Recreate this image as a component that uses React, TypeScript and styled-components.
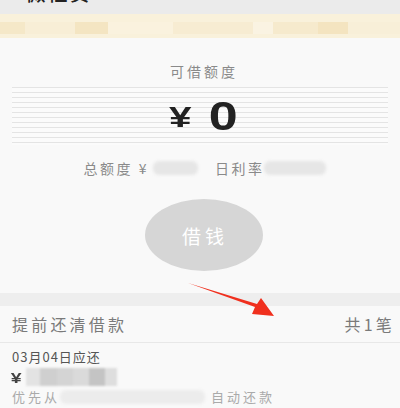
import styled, { createGlobalStyle } from "styled-components"

const Global = createGlobalStyle`
  html, body {
    margin: 0;
    padding: 0;
    background: #f9f9f9;
    font-family: "Noto Sans CJK SC", "Noto Sans", sans-serif;
  }
  * { box-sizing: border-box; }
`;

const Page = styled.div`
  position: relative;
  width: 400px;
  height: 408px;
  overflow: hidden;
  background: #f9f9f9;
`;

const TopBar = styled.div`
  height: 14px;
  background: #ebebeb;
  overflow: hidden;
  display: flex;
  align-items: flex-end;
  gap: 12px;
`;

const TopText = styled.span`
  font-size: 20px;
  line-height: 20px;
  font-weight: 500;
  letter-spacing: 2px;
  color: #222;
  margin-bottom: 11px;
`;

const Notice = styled.div`
  height: 24px;
  display: flex;
  background: #f9f1db;
  padding: 8px 0 4px;
`;

const Pixel = styled.div<{ $w: number; $c: string }>`
  width: ${(p) => p.$w}px;
  height: 100%;
  background: ${(p) => p.$c};
`;

const Card = styled.div`
  display: flex;
  flex-direction: column;
  align-items: center;
  padding-top: 24px;
  height: 255px;
`;

const Caption = styled.div`
  font-size: 14px;
  letter-spacing: 3px;
  color: #8a8a8a;
  line-height: 18px;
  margin-left: 8px;
`;

const Striped = styled.div`
  margin-top: 7px;
  width: 376px;
  height: 58px;
  display: flex;
  align-items: center;
  justify-content: center;
  gap: 16px;
  background: repeating-linear-gradient(
    to bottom,
    #e4e4e4 0px,
    #e4e4e4 1px,
    #fbfbfb 1px,
    #fbfbfb 5px
  );
`;

const Yen = styled.span`
  display: inline-block;
  font-family: "Liberation Sans", Arial, sans-serif;
  font-size: 30px;
  font-weight: 700;
  color: #222;
  margin-top: 2px;
  margin-left: 6px;
  transform: scaleX(1.35);
`;

const Big = styled.span`
  display: inline-block;
  font-family: "Liberation Sans", Arial, sans-serif;
  font-size: 40px;
  font-weight: 700;
  color: #222;
  transform: scaleX(1.3);
  margin-left: 8px;
`;

const InfoRow = styled.div`
  margin-top: 14px;
  display: flex;
  align-items: center;
  font-size: 14px;
  letter-spacing: 2.5px;
  color: #8a8a8a;
  line-height: 18px;
  margin-left: 10px;
`;

const Blur = styled.div<{ $w: number; $h?: number; $c?: string }>`
  width: ${(p) => p.$w}px;
  height: ${(p) => p.$h ?? 14}px;
  background: ${(p) => p.$c ?? "#e6e6e6"};
  border-radius: 6px;
  filter: blur(1.5px);
`;

const Gap = styled.div<{ $w: number }>`
  width: ${(p) => p.$w}px;
`;

const BorrowButton = styled.button`
  margin-top: 22px;
  margin-left: 8px;
  width: 118px;
  height: 72px;
  border-radius: 50%;
  border: none;
  background: #d6d6d6;
  color: #fff;
  font-size: 19px;
  letter-spacing: 4px;
  padding-left: 8px;
  font-family: inherit;
`;

const Band = styled.div`
  height: 13px;
  background: #eeeeee;
`;

const SectionRow = styled.div`
  height: 37px;
  display: flex;
  align-items: center;
  justify-content: space-between;
  padding: 0 5px 0 12px;
  font-size: 16px;
  letter-spacing: 3.2px;
  color: #7a7a7a;
  border-bottom: 1px solid #e8e8e8;
  background: #f9f9f9;
`;

const Item = styled.div`
  padding: 6px 12px 0;
  display: flex;
  flex-direction: column;
  gap: 2px;
`;

const Due = styled.div`
  font-size: 13px;
  letter-spacing: 1px;
  color: #555;
  line-height: 16px;
`;

const AmountRow = styled.div`
  display: flex;
  align-items: center;
  height: 20px;
`;

const SmallYen = styled.span`
  display: inline-block;
  font-family: "Liberation Sans", Arial, sans-serif;
  font-size: 15px;
  font-weight: 700;
  color: #444;
  margin-right: 6px;
  transform: scaleX(1.3);
`;

const PixelBlock = styled.div`
  display: flex;
  height: 18px;
  filter: blur(1px);
`;

const AutoRow = styled.div`
  display: flex;
  align-items: center;
  font-size: 13px;
  letter-spacing: 3px;
  color: #aaa;
  line-height: 16px;
`;

const Arrow = styled.svg`
  position: absolute;
  left: 180px;
  top: 278px;
`;

export default function App() {
  const notice: [number, string][] = [
    [25, "#f5e8c8"], [50, "#f8eed6"], [33, "#f4e5c2"], [65, "#faf2de"],
    [80, "#f7ecd2"], [20, "#faf3e2"], [45, "#f6eacd"], [30, "#f4e4c0"],
    [52, "#f8efd8"],
  ];
  const amount: [number, string][] = [
    [14, "#e3e3e3"], [17, "#cfcfcf"], [16, "#d4d4d4"], [16, "#dadada"],
    [16, "#c4c4c4"], [12, "#dedede"],
  ];

  return (
    <Page>
      <Global />
      <TopBar>
        <TopText>&lt;</TopText>
        <TopText>微粒贷</TopText>
      </TopBar>
      <Notice>
        {notice.map(([w, c], i) => (
          <Pixel key={i} $w={w} $c={c} />
        ))}
      </Notice>

      <Card>
        <Caption>可借额度</Caption>
        <Striped>
          <Yen>¥</Yen>
          <Big>0</Big>
        </Striped>
        <InfoRow>
          总额度 ¥<Gap $w={4} />
          <Blur $w={45} />
          <Gap $w={17} />
          日利率
          <Blur $w={62} />
        </InfoRow>
        <BorrowButton>借钱</BorrowButton>
      </Card>

      <Band />
      <SectionRow>
        <span>提前还清借款</span>
        <span>共1笔</span>
      </SectionRow>

      <Item>
        <Due>03月04日应还</Due>
        <AmountRow>
          <SmallYen>¥</SmallYen>
          <PixelBlock>
            {amount.map(([w, c], i) => (
              <Pixel key={i} $w={w} $c={c} />
            ))}
          </PixelBlock>
        </AmountRow>
        <AutoRow>
          优先从
          <Blur $w={145} $h={14} $c="#ececec" />
          <Gap $w={6} />
          自动还款
        </AutoRow>
      </Item>

      <Arrow width="100" height="42" viewBox="0 0 100 42">
        <path d="M8 5 L75 29 L72 36 L94 38 L81 20 L77 26 Z" fill="#f0301e" />
      </Arrow>
    </Page>
  )
}
